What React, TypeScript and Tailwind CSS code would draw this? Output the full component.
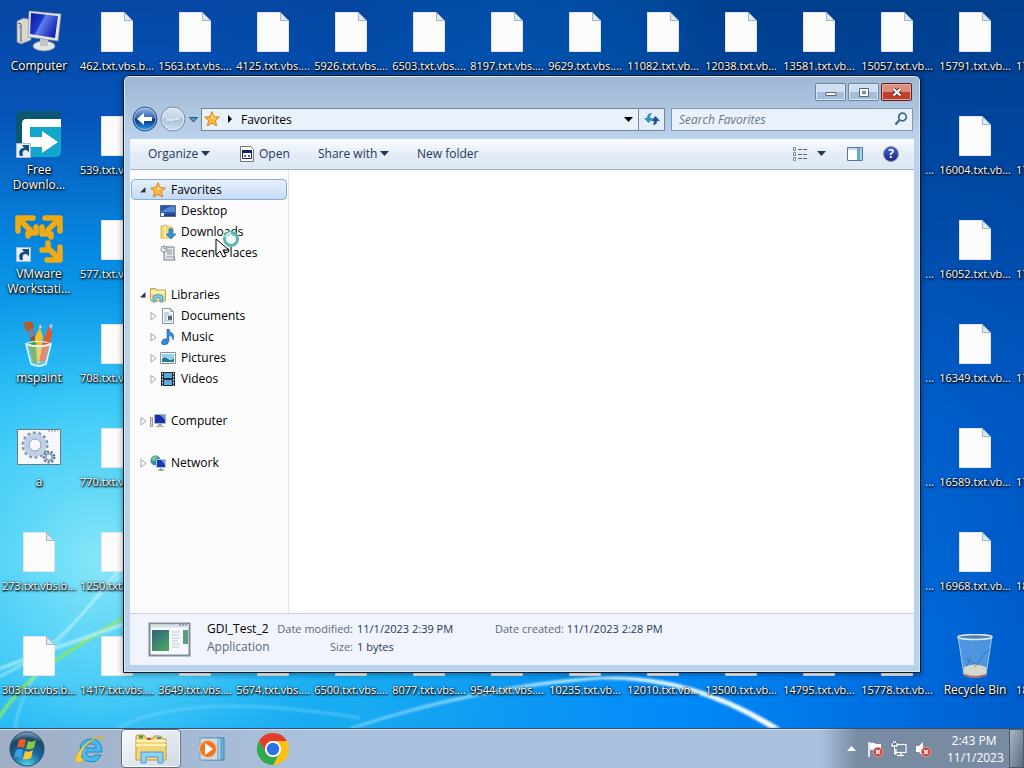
import React from 'react';

const columns: string[][] = [
  ['@computer:Computer', '@fdm:Free Downlo...', '@vmware:VMware Workstati...', '@paint:mspaint', '@gears:a', '273.txt.vbs.b...', '303.txt.vbs.b...'],
  ['462.txt.vbs.b...', '539.txt.vbs.b...', '577.txt.vbs.b...', '708.txt.vbs.b...', '770.txt.vbs.b...', '1250.txt.vbs....', '1417.txt.vbs....'],
  ['1563.txt.vbs....', '', '', '', '', '', '3649.txt.vbs....'],
  ['4125.txt.vbs....', '', '', '', '', '', '5674.txt.vbs....'],
  ['5926.txt.vbs....', '', '', '', '', '', '6500.txt.vbs....'],
  ['6503.txt.vbs....', '', '', '', '', '', '8077.txt.vbs....'],
  ['8197.txt.vbs....', '', '', '', '', '', '9544.txt.vbs....'],
  ['9629.txt.vbs....', '', '', '', '', '', '10235.txt.vb...'],
  ['11082.txt.vb...', '', '', '', '', '', '12010.txt.vb...'],
  ['12038.txt.vb...', '', '', '', '', '', '13500.txt.vb...'],
  ['13581.txt.vb...', '', '', '', '', '', '14795.txt.vb...'],
  ['15057.txt.vb...', '...', '...', '...', '...', '...', '15778.txt.vb...'],
  ['15791.txt.vb...', '16004.txt.vb...', '16052.txt.vb...', '16349.txt.vb...', '16589.txt.vb...', '16968.txt.vb...', '@bin:Recycle Bin'],
  ['17', '17', '17', '17', '17', '18', '18'],
];

const Wallpaper = () => (
  <svg className="absolute inset-0 h-full w-full" viewBox="0 0 1024 728" preserveAspectRatio="none" aria-hidden="true">
    <defs>
      <linearGradient id="sky" x1="0" y1="0" x2="0" y2="1">
        <stop offset="0" stopColor="#0646a4" />
        <stop offset=".16" stopColor="#0654b8" />
        <stop offset=".35" stopColor="#068be2" />
        <stop offset=".55" stopColor="#1db8f5" />
        <stop offset="1" stopColor="#18adf2" />
      </linearGradient>
      <linearGradient id="night" x1="0" y1="0" x2="1" y2="0">
        <stop offset="0" stopColor="#0060d0" stopOpacity="0" />
        <stop offset=".35" stopColor="#0080ee" stopOpacity=".05" />
        <stop offset=".65" stopColor="#0088fa" stopOpacity=".9" />
        <stop offset=".85" stopColor="#0070e2" />
        <stop offset="1" stopColor="#005ccb" />
      </linearGradient>
      <linearGradient id="dark" x1="0" y1="0" x2="0" y2="1">
        <stop offset="0" stopColor="#003f8d" />
        <stop offset=".3" stopColor="#0047a2" stopOpacity=".9" />
        <stop offset=".6" stopColor="#0052b8" stopOpacity=".4" />
        <stop offset=".85" stopColor="#0050b0" stopOpacity="0" />
      </linearGradient>
      <linearGradient id="fade" x1="0" y1="0" x2="1" y2="0">
        <stop offset=".2" stopColor="#fff" stopOpacity="0" />
        <stop offset=".7" stopColor="#fff" />
      </linearGradient>
      <mask id="right"><rect width="1024" height="728" fill="url(#fade)" /></mask>
      <radialGradient id="glow" gradientUnits="userSpaceOnUse" cx="100" cy="560" r="270">
        <stop offset="0" stopColor="#a4f4fa" stopOpacity=".8" />
        <stop offset=".5" stopColor="#66dffa" stopOpacity=".6" />
        <stop offset="1" stopColor="#30c0f8" stopOpacity="0" />
      </radialGradient>
      <linearGradient id="arc" x1="0" y1="0" x2="1" y2="0">
        <stop offset="0" stopColor="#7fe0ff" stopOpacity=".3" />
        <stop offset=".5" stopColor="#b5ecff" />
        <stop offset="1" stopColor="#fff" />
      </linearGradient>
      <filter id="soft"><feGaussianBlur stdDeviation="1" /></filter>
    </defs>
    <rect width="1024" height="728" fill="url(#sky)" />
    <rect width="1024" height="728" fill="url(#night)" />
    <rect width="1024" height="728" fill="url(#dark)" mask="url(#right)" />
    <rect width="520" height="728" fill="url(#glow)" />
    <g fill="none" filter="url(#soft)">
      <path d="M-4 722Q20 684 56 660T130 614" stroke="#8ce860" strokeWidth="3" />
      <path d="M-4 678Q50 655 94 600T150 545" stroke="#d8fbff" strokeWidth="2" strokeOpacity=".7" />
      <path d="M-4 670Q60 646 130 622" stroke="#e0fcff" strokeWidth="3" strokeOpacity=".6" />
      <path d="M15 728Q20 690 60 640T140 560" stroke="#d8fbff" strokeWidth="2" strokeOpacity=".35" />
      <path d="M118 728Q190 690 360 718" stroke="#a5ecff" strokeWidth="3" strokeOpacity=".3" />
    </g>
    <path d="M350 728Q480 684 600 677Q690 672 780 728L770 728Q690 678 600 679Q480 688 354 728Z" fill="url(#arc)" stroke="#fff" strokeOpacity=".4" filter="url(#soft)" />
  </svg>
);

const Shortcut = () => (
  <g>
    <path d="M1.500 29.500h14v14h-14z" fill="#e9f1f8" stroke="#a9bccd" />
    <path d="M5 42c-2-5 0-8 4-8l-2-3h7v7l-3-2c-3 0-4 2-3 6z" fill="#174b88" />
  </g>
);

const Page = () => (
  <svg className="h-11 w-9" viewBox="0 0 36 44" aria-hidden="true">
    <path d="M2.500 2.500h23l8 8v31h-31z" fill="#fbfbfa" stroke="#e2e6ec" />
    <path d="M25.500 2.500v8h8z" fill="#dce8f2" stroke="#8fa5ba" strokeWidth=".8" />
  </svg>
);

const DesktopIcon = ({ kind }: { kind: string }) => {
  if (kind === 'computer') {
    return (
      <svg className="h-12 w-12" viewBox="0 0 48 48" aria-hidden="true">
        <defs><linearGradient id="crt" x1="0" y1="0" x2="1" y2=".5"><stop offset="0" stopColor="#0718a0" /><stop offset=".45" stopColor="#1c3ccc" /><stop offset=".5" stopColor="#5e80ee" /><stop offset="1" stopColor="#1628b8" /></linearGradient></defs>
        <path d="M2 11l7-3 7 2v20L6 34l-4-2z" fill="#d8d8d2" stroke="#85878a" strokeWidth=".7" />
        <path d="M3 13l3 1v18M4 17h1" stroke="#555" strokeWidth="1" fill="none" />
        <ellipse cx="29" cy="36" rx="11" ry="5" fill="#e2e4e5" stroke="#898d92" strokeWidth=".8" />
        <path d="M25 29h8v7h-8z" fill="#c2c5c8" />
        <path d="M14 1l32 3-3 27-30-4z" fill="#e6e6df" stroke="#8d9398" strokeWidth=".7" />
        <path d="M16 3l27 3-3 22-25-4z" fill="url(#crt)" />
      </svg>
    );
  }
  if (kind === 'fdm') {
    return (
      <svg className="h-12 w-12 overflow-visible" viewBox="0 0 48 48" aria-hidden="true">
        <rect x="1" y="-3" width="45" height="46" rx="5" fill="#0d5671" />
        <path d="M15 12h31v27q-1 4-5 4H15z" fill="#10a7ca" />
        <path d="M7 10q0-5 4-5h35v8H15v10h12v-6l16 11-16 11v-6H7z" fill="#fff" />
        <Shortcut />
      </svg>
    );
  }
  if (kind === 'vmware') {
    return (
      <svg className="h-12 w-12 overflow-visible" viewBox="0 0 48 48" aria-hidden="true">
        <g fill="none" stroke="#efaa14" strokeWidth="5.500" strokeLinejoin="round" strokeLinecap="round">
          <path d="M3 13V0h15M4 1l11 11M21 9v6h-8v3" />
          <path d="M30 0h15v13M44 1L33 12M27 9v7h9v3" />
          <path d="M45 29v13H32M44 41L34 31M27 32h6v-7" />
        </g>
        <Shortcut />
      </svg>
    );
  }
  if (kind === 'paint') {
    return (
      <svg className="h-12 w-12 overflow-visible" viewBox="0 0 48 48" aria-hidden="true">
        <path d="M8 1l9-2 2 7-7 4z" fill="#b45a26" /><path d="M11 10l7-4 3 6-6 4z" fill="#6d84ad" /><path d="M15 16l5-3 6 25-4 1z" fill="#8a5638" />
        <path d="M20 15l5-10 3 10-3 26h-5z" fill="#f0c22e" /><path d="M24 6l1-4 2 4z" fill="#efdcc0" /><path d="M31 11l4-8 2 9-7 27h-6z" fill="#ee5522" /><path d="M34 3l4-1-2 6z" fill="#b8c3e6" /><path d="M17 18l4 2 1 21h-4l-4-17z" fill="#4a9a35" />
        <path d="M11 22q13 4 25 0l-5 20q-7 4-15 0z" fill="#ddecef" fillOpacity=".35" stroke="#e6f5fa" strokeWidth="1.500" />
        <ellipse cx="23.500" cy="22" rx="12" ry="2.500" fill="none" stroke="#eefaff" />
      </svg>
    );
  }
  if (kind === 'gears') {
    return (
      <svg className="h-12 w-12" viewBox="0 0 48 48" aria-hidden="true">
        <path d="M2.500 3.500h43v35h-43z" fill="#f5f7fa" stroke="#6d7985" /><path d="M33 5h10" stroke="#7e8995" strokeDasharray="2 1" />
        <circle cx="20" cy="19" r="12" fill="none" stroke="#7b93ab" strokeWidth="3" strokeDasharray="3 2.400" />
        <circle cx="20" cy="19" r="9" fill="none" stroke="#bdd0e5" strokeWidth="5" /><circle cx="20" cy="19" r="6" fill="#f5f7fa" stroke="#7e9ac2" />
        <circle cx="34" cy="31" r="5" fill="#cddbea" stroke="#617b98" strokeWidth="3" strokeDasharray="2 1.500" /><circle cx="34" cy="31" r="3" fill="#eef5fb" stroke="#7898b8" />
      </svg>
    );
  }
  if (kind === 'bin') {
    return (
      <svg className="h-12 w-12" viewBox="0 0 48 48" aria-hidden="true">
        <path d="M7 2l6 39q11 5 22 0l6-39z" fill="#9cc8ed" fillOpacity=".5" stroke="#a9c9e7" />
        <path d="M13 33q11-5 22 0v8q-11 4-22 0z" fill="#d8d6ca" /><path d="M13 41q11 4 22 0" stroke="#a76b67" strokeWidth="2" fill="none" />
        <path d="M14 24l10 6M24 33l9-13 6-5M16 32l3-8" stroke="#3468aa" strokeOpacity=".7" fill="none" />
        <ellipse cx="24" cy="3" rx="17" ry="2.500" fill="#4e82ba" stroke="#dcecf8" strokeWidth="1.500" />
      </svg>
    );
  }
  return <Page />;
};

const DesktopItem = ({ item }: { item: string }) => {
  if (item === '') return <div />;
  const special = item.startsWith('@');
  const [kind, name] = special ? item.slice(1).split(':') : ['page', item];
  return (
    <div className="flex flex-col items-center pt-[10px] text-white">
      <div className="flex h-12 items-start justify-center">
        <DesktopIcon kind={kind} />
      </div>
      <span className={`w-[74px] leading-[15px] [text-shadow:0_1px_2px_#000,1px_1px_2px_#000,0_0_3px_#0008] ${name === '...' ? 'text-right' : name.length < 3 && name !== 'a' ? 'text-left' : 'text-center'} ${special ? '' : 'whitespace-nowrap text-[11px]'}`}>
        {name}
      </span>
    </div>
  );
};

const Star = () => (
  <svg className="h-4 w-4 shrink-0" viewBox="0 0 16 16" aria-hidden="true">
    <path d="M8 .7l2.100 4.900 5.300.5-4 3.500 1.200 5.400L8 12.200 3.400 15l1.200-5.400-4-3.500 5.300-.5z" fill="#fcb93e" stroke="#d4791c" strokeWidth=".9" />
    <path d="M8 3l1.300 3.400 3.300.3-4.600 1z" fill="#fff0a8" />
  </svg>
);

const Monitor = () => (
  <svg className="h-4 w-4 shrink-0" viewBox="0 0 16 16" aria-hidden="true">
    <path d="M.5 4.500h2v9h-2z" fill="#ddd" stroke="#999" /><path d="M4.500 1.500h11v9h-11z" fill="#1730b0" stroke="#b0b4b8" />
    <path d="M10 2h5v5z" fill="#6d8fe8" /><path d="M8 11h4v2h2v1H6v-1h2z" fill="#a6adb4" />
  </svg>
);

const treeIcons: Record<string, React.ReactNode> = {
  Favorites: <Star />,
  Computer: <Monitor />,
  Desktop: (
    <svg className="h-4 w-4" viewBox="0 0 16 16" aria-hidden="true"><path d="M.5 2.500h15v11H.5z" fill="#2859b2" stroke="#52647d" /><path d="M1 9q7-6 14-6v6z" fill="#5688cf" /><path d="M1 12h14" stroke="#1c2c48" /><path d="M1 10h3v3H1z" fill="#e9f3ff" /></svg>
  ),
  Downloads: (
    <svg className="h-4 w-4" viewBox="0 0 16 16" aria-hidden="true"><path d="M1 2l5-1 2 2h4v11H1z" fill="#f4d877" stroke="#d0a640" strokeWidth=".8" /><path d="M5 2v12" stroke="#fff0b2" strokeWidth="2" /><path d="M9 5h4v5h3l-5 5-5-5h3z" fill="#3a92d4" stroke="#1c68aa" strokeWidth=".7" /></svg>
  ),
  'Recent Places': (
    <svg className="h-4 w-4" viewBox="0 0 16 16" aria-hidden="true"><path d="M4 2h10v9l1 4H4z" fill="#e4e8ec" stroke="#737d87" /><path d="M7 5h5M7 7h5M7 9h5M6 12h8" stroke="#8a96a3" /><circle cx="4" cy="4" r="3" fill="#fafcff" stroke="#7e8b98" /><path d="M4 2v2h2" stroke="#526172" strokeWidth=".8" fill="none" /></svg>
  ),
  Libraries: (
    <svg className="h-4 w-4" viewBox="0 0 16 16" aria-hidden="true"><path d="M.5 14V1.500h5l1 1.500h9v11z" fill="#f6df87" stroke="#c8a345" /><path d="M1 5h14" stroke="#fff5c7" strokeWidth="2" /><path d="M3 15V9q5-3 10 0v6h-3v-4H6v4z" fill="#7ec8e8" stroke="#388db5" strokeWidth=".7" /></svg>
  ),
  Documents: (
    <svg className="h-4 w-4" viewBox="0 0 16 16" aria-hidden="true"><path d="M2.500.5h8l3 3v12h-11z" fill="#fff" stroke="#8793a0" /><path d="M10.500.5v3h3M4 5h5M4 7h8M4 9h3M4 11h3M4 13h8" stroke="#91a5b9" fill="none" /><path d="M8 8h4v4H8z" fill="#567" /></svg>
  ),
  Music: (
    <svg className="h-4 w-4" viewBox="0 0 16 16" aria-hidden="true"><path d="M7 0h2q0 3 3 4 3 3 1 7 0-4-4-5v6q-1 4-5 4-4-1-2-4 1-3 5-2z" fill="#3588d4" stroke="#1b67b0" strokeWidth=".6" /></svg>
  ),
  Pictures: (
    <svg className="h-4 w-4" viewBox="0 0 16 16" aria-hidden="true"><path d="M.5 2.500h15v11H.5z" fill="#fff" stroke="#82909e" /><path d="M2 4h12v8H2z" fill="#8ed0f0" /><path d="M2 9q3-3 6 0t6-1v4H2z" fill="#28787f" /></svg>
  ),
  Videos: (
    <svg className="h-4 w-4" viewBox="0 0 16 16" aria-hidden="true"><path d="M1 1h14v14H1z" fill="#202c38" /><path d="M4 2h8v5H4zM4 9h8v5H4z" fill="#5ca8e0" /><path d="M2.500 2v13M13.500 2v13" stroke="#e6edf3" strokeDasharray="1.500 1.500" /></svg>
  ),
  Network: (
    <svg className="h-4 w-4" viewBox="0 0 16 16" aria-hidden="true"><circle cx="5.500" cy="5.500" r="5" fill="#2e89bd" /><path d="M1 4q4-5 7-2-3 1-3 4-2 1-4-2z" fill="#7bcf72" /><path d="M6.500 4.500h9v8h-9z" fill="#1838b8" stroke="#c0c8d0" /><path d="M11 5h4v5z" fill="#6b94ee" /><path d="M8 15h6M11 13v3" stroke="#6c7b8a" /></svg>
  ),
};

interface TreeRowProps {
  name: string;
  child?: boolean;
  open?: boolean;
  leaf?: boolean;
  selected?: boolean;
}

const TreeRow = ({ name, child, open, leaf, selected }: TreeRowProps) => (
  <button
    type="button"
    className={`flex h-[21px] w-full items-center rounded-sm border text-left text-black ${child ? 'pl-4' : 'pl-1.5'} ${selected ? 'border-[#84acdd] bg-linear-to-b from-[#e8f1fc] to-[#c5daf5]' : 'border-transparent'}`}
  >
    <svg className="mr-[2px] h-3 w-[10px] shrink-0" viewBox="0 0 10 12" aria-hidden="true">
      {!leaf && (open
        ? <path d="M2 8.500L7.500 3v5.500z" fill="#333" />
        : <path d="M3 2.500v7.500l5-3.750z" fill="#fff" stroke="#a3a3a3" />)}
    </svg>
    {treeIcons[name]}
    <span className="ml-[5px]">{name}</span>
  </button>
);

const Caret = () => (
  <svg className="h-[5px] w-[9px]" viewBox="0 0 9 5" aria-hidden="true"><path d="M0 0h9L4.500 5z" fill="currentColor" /></svg>
);

const TitleBar = () => (
  <div className="flex justify-end gap-[2px] pr-[2px] pt-[7px]">
    <button type="button" aria-label="Minimize" className="flex h-[18px] w-[31px] items-center justify-center rounded-[2px] border border-[#6d83a0] bg-linear-to-b from-[#cfdef0] from-50% to-[#a5bdd9] to-50% shadow-[inset_0_0_0_1px_#dce9f6]">
      <svg className="h-3 w-3" viewBox="0 0 12 12" aria-hidden="true"><path d="M1 6.500h10v3H1z" fill="#fff" stroke="#59687e" /></svg>
    </button>
    <button type="button" aria-label="Maximize" className="flex h-[18px] w-[31px] items-center justify-center rounded-[2px] border border-[#6d83a0] bg-linear-to-b from-[#cfdef0] from-50% to-[#a5bdd9] to-50% shadow-[inset_0_0_0_1px_#dce9f6]">
      <svg className="h-3 w-3" viewBox="0 0 12 12" aria-hidden="true"><path d="M1.500 2.500h9v8h-9z" fill="#fff" stroke="#59687e" /><path d="M4.500 5.500h3v2h-3z" fill="#b7c9de" stroke="#59687e" /></svg>
    </button>
    <button type="button" aria-label="Close" className="flex h-[18px] w-[31px] items-center justify-center rounded-[2px] border border-[#5c1f22] bg-linear-to-b from-[#dd8e7e] from-50% to-[#c1402b] to-50% shadow-[inset_0_0_0_1px_#eba898]">
      <svg className="h-3 w-3" viewBox="0 0 12 12" aria-hidden="true"><path d="M2.500 3l7 6.500m0-6.500l-7 6.500" stroke="#5b3039" strokeWidth="4" /><path d="M2.500 3l7 6.500m0-6.500l-7 6.500" stroke="#fff" strokeWidth="2.200" /></svg>
    </button>
  </div>
);

const NavBar = () => (
  <div className="flex items-center pb-[7px] pl-[2px] pr-px pt-[5px]">
    <button type="button" aria-label="Back" className="h-[26px] w-[26px] shrink-0">
      <svg viewBox="0 0 26 26" aria-hidden="true">
        <defs><linearGradient id="back" x1="0" y1="0" x2="0" y2="1"><stop offset="0" stopColor="#9bb8e4" /><stop offset=".48" stopColor="#2f60b4" /><stop offset=".52" stopColor="#0b2f86" /><stop offset="1" stopColor="#2fa6ea" /></linearGradient></defs>
        <circle cx="13" cy="13" r="12" fill="url(#back)" stroke="#33527e" /><circle cx="13" cy="13" r="10.800" fill="none" stroke="#d0e2f5" strokeOpacity=".6" />
        <path d="M5 13l7-6v4h8v4h-8v4z" fill="#fff" />
      </svg>
    </button>
    <button type="button" aria-label="Forward" className="ml-[2px] h-[26px] w-[26px] shrink-0">
      <svg viewBox="0 0 26 26" aria-hidden="true">
        <defs><linearGradient id="fwd" x1="0" y1="0" x2="0" y2="1"><stop offset="0" stopColor="#dae5f1" /><stop offset=".5" stopColor="#c4d3e4" /><stop offset=".52" stopColor="#a9bdd3" /><stop offset="1" stopColor="#d3e3f3" /></linearGradient></defs>
        <circle cx="13" cy="13" r="12" fill="url(#fwd)" stroke="#788ca5" /><circle cx="13" cy="13" r="10.800" fill="none" stroke="#edf5fc" strokeOpacity=".7" />
        <path d="M6 14h8M14 13h5" stroke="#d9e5f0" strokeWidth="2" />
      </svg>
    </button>
    <button type="button" aria-label="Recent pages" className="flex w-[15px] shrink-0 justify-center">
      <svg className="h-[7px] w-[9px]" viewBox="0 0 9 7" aria-hidden="true"><path d="M.5 1.500h8L4.500 6z" fill="#49a0bb" stroke="#24546e" /></svg>
    </button>
    <div className="flex h-[23px] min-w-0 flex-1 items-center border border-[#71859f] bg-[#e9f1fb] pl-[2px] text-black">
      <Star />
      <svg className="ml-[8px] h-[8px] w-[4px]" viewBox="0 0 4 8" aria-hidden="true"><path d="M0 0l4 4-4 4z" fill="#000" /></svg>
      <button type="button" className="ml-[9px]">Favorites</button>
      <button type="button" aria-label="Previous locations" className="ml-auto px-[5px] text-black"><Caret /></button>
    </div>
    <button type="button" aria-label="Refresh" className="flex h-[23px] w-[26px] shrink-0 items-center justify-center border border-l-0 border-[#71859f] bg-[#e4eefa]">
      <svg className="h-4 w-4" viewBox="0 0 16 16" aria-hidden="true"><path d="M8 2Q3 2 3 7H0l4.500 5L9 7H6Q6 4 8 2z" fill="#328fc0" /><path d="M9 14q4 0 4-4h3l-4.500-5L7 10h3q0 2-1 4z" fill="#1f5696" /></svg>
    </button>
    <label className="ml-[6px] flex h-[23px] w-[242px] items-center border border-[#8398b0] bg-[#e9f1fb] px-[7px]">
      <input type="text" aria-label="Search Favorites" placeholder="Search Favorites" className="min-w-0 flex-1 bg-transparent italic outline-none placeholder:text-[#6b7785]" />
      <svg className="-mr-[3px] h-[14px] w-[14px]" viewBox="0 0 14 14" aria-hidden="true"><circle cx="8.500" cy="5" r="3.800" fill="#eef7ff" stroke="#3d6590" strokeWidth="1.700" /><path d="M5.500 8L1.500 12.500" stroke="#3d6590" strokeWidth="2.200" /></svg>
    </label>
  </div>
);

const CommandBar = () => (
  <div className="flex h-[31px] items-center border-b border-[#a3b4c9] bg-linear-to-b from-[#fbfdff] via-[#e4ecf7] to-[#dde7f4] pb-px pl-[18px] pr-[15px] text-[#1e395b]">
    <button type="button" className="flex w-[92px] items-center gap-[3px]">Organize <Caret /></button>
    <button type="button" className="flex w-[78px] items-center gap-[5px]">
      <svg className="h-4 w-[14px]" viewBox="0 0 14 16" aria-hidden="true"><path d="M.5.5h10l3 3v12H.5z" fill="#fff" stroke="#777" /><path d="M2.500 5.500h9v7h-9z" fill="#fff" stroke="#182060" /><path d="M2 4h10v3H2z" fill="#182060" /><path d="M4 10h2M8 10h2M5 9v2M9 9v2" stroke="#334" /></svg>
      Open
    </button>
    <button type="button" className="flex w-[99px] items-center gap-[3px]">Share with <Caret /></button>
    <button type="button">New folder</button>
    <button type="button" aria-label="Change your view" className="ml-auto flex items-center gap-[9px]">
      <svg className="h-[14px] w-4" viewBox="0 0 16 14" aria-hidden="true"><path d="M1.500.5h2v3h-2zM1.500 5.500h2v3h-2zM1.500 10.500h2v3h-2z" fill="#fff" stroke="#7888a0" /><path d="M6 2.500h10M6 7.500h10M6 11.500h10" stroke="#53647c" strokeDasharray="4 1" /></svg>
      <Caret />
    </button>
    <button type="button" aria-label="Show the preview pane" className="ml-[21px]">
      <svg className="h-[14px] w-4" viewBox="0 0 16 14" aria-hidden="true"><path d="M.5.5h15v13H.5z" fill="#fff" stroke="#52789c" /><path d="M1 2h9" stroke="#8fb9d4" /><path d="M10 1h5v12h-5z" fill="#66acc4" /><path d="M13 1h2v12h-2z" fill="#a8d8df" /></svg>
    </button>
    <button type="button" aria-label="Get help" className="ml-5 flex h-4 w-4 items-center justify-center rounded-full border border-[#8b94b4] bg-linear-to-b from-[#4563c8] to-[#1a2b8c] text-[12px] font-bold leading-none text-white">?</button>
  </div>
);

const Sidebar = () => (
  <nav className="flex w-[159px] shrink-0 flex-col gap-[21px] border-r border-[#dfe8f3] bg-[#fcfcfc] pl-px pr-px pt-[9px]">
    <div>
      <TreeRow name="Favorites" open selected />
      <TreeRow name="Desktop" child leaf />
      <TreeRow name="Downloads" child leaf />
      <TreeRow name="Recent Places" child leaf />
    </div>
    <div>
      <TreeRow name="Libraries" open />
      <TreeRow name="Documents" child />
      <TreeRow name="Music" child />
      <TreeRow name="Pictures" child />
      <TreeRow name="Videos" child />
    </div>
    <TreeRow name="Computer" />
    <TreeRow name="Network" />
  </nav>
);

const DetailsPane = () => (
  <footer className="flex h-[52px] border-t border-[#c8d0dc] bg-[#f1f4fc] pl-[18px] pt-[6px] leading-[18px] text-[#5a6779]">
    <svg className="mt-[2px] h-[35px] w-[43px]" viewBox="0 0 43 35" aria-hidden="true">
      <defs><linearGradient id="thumb" x1="0" y1="0" x2=".6" y2="1"><stop offset="0" stopColor="#2f6080" /><stop offset="1" stopColor="#4aa062" /></linearGradient></defs>
      <path d="M1.500 1.500h40v32h-40z" fill="#f7f9fb" stroke="#7f8b98" strokeWidth="2" /><path d="M3 4h38" stroke="#d6e0e8" strokeWidth="3" /><path d="M31 3h9" stroke="#61707e" strokeDasharray="2 1" />
      <path d="M4 8h17v21H4z" fill="url(#thumb)" /><path d="M24 10h8M24 13h7M24 16h8M24 19h6M24 22h8M24 25h7" stroke="#bdc5cc" /><path d="M35 8h5v14h-5z" fill="#5b9d84" />
    </svg>
    <div className="ml-4 w-[62px] whitespace-nowrap">
      <div className="text-black">GDI_Test_2</div>
      <div>Application</div>
    </div>
    <div className="ml-1 w-[80px] whitespace-nowrap text-right text-[11px]">
      <div>Date modified:</div>
      <div>Size:</div>
    </div>
    <div className="ml-1 w-[138px] text-[11px] text-[#1e395b]">
      <div>11/1/2023 2:39 PM</div>
      <div>1 bytes</div>
    </div>
    <div className="text-[11px]">Date created: <span className="text-[#1e395b]">11/1/2023 2:28 PM</span></div>
  </footer>
);

const ExplorerWindow = () => (
  <section className="absolute left-[123px] right-[103px] top-[75px] bottom-[55px] flex flex-col rounded-t-md border border-[#0c1a2c] bg-linear-to-b from-[#a0b7d3] to-[#b9d1ea] to-[60px] px-[6px] pb-[7px] shadow-[inset_0_0_0_1px_#d9e8f6,0_1px_6px_#0006]">
    <TitleBar />
    <NavBar />
    <CommandBar />
    <div className="flex min-h-0 flex-1 bg-white">
      <Sidebar />
      <main className="flex-1" />
    </div>
    <DetailsPane />
  </section>
);

const Cursor = () => (
  <svg className="absolute left-[215px] top-[229px] h-8 w-7" viewBox="0 0 28 32" aria-hidden="true">
    <circle cx="16" cy="10" r="6.500" fill="#eefcfa" fillOpacity=".7" stroke="#5cb8ae" strokeWidth="3" />
    <path d="M10 8q2-4 6-4" stroke="#b8f1e9" strokeWidth="2" fill="none" />
    <path d="M1 10v16l4-4 3 6 3-1-3-6h6z" fill="#fff" stroke="#000" />
  </svg>
);

const Taskbar = () => (
  <div className="flex h-10 shrink-0 border-t border-[#33526f] bg-linear-to-r from-[#9fafc5] via-[#a9c1dd] via-30% to-[#a9c1dd] to-[80%] shadow-[inset_0_1px_0_#d2deeb]">
    <button type="button" aria-label="Start" className="mr-[6px] flex w-[54px] items-center justify-center">
      <svg className="h-9 w-9" viewBox="0 0 36 36" aria-hidden="true">
        <defs><radialGradient id="orb" cx=".5" cy="1" r="1"><stop offset="0" stopColor="#54d8ee" /><stop offset=".45" stopColor="#176aa0" /><stop offset=".8" stopColor="#1c4668" /><stop offset="1" stopColor="#8fb0c8" /></radialGradient></defs>
        <circle cx="18" cy="18" r="17" fill="url(#orb)" stroke="#264866" />
        <path d="M10 9q4-2 7 0l-2 8q-4-2-7 0z" fill="#ea5b24" /><path d="M19 10q4 2 8-1l-2 8q-4 2-8 1z" fill="#8bc63e" /><path d="M7 19q4-2 7 0l-2 8q-4-2-7 0z" fill="#3f9fe6" /><path d="M16 20q4 2 8-1l-2 8q-4 2-8 1z" fill="#fdc92e" />
      </svg>
    </button>
    <div className="flex flex-1 gap-px">
      <button type="button" aria-label="Internet Explorer" className="flex w-[60px] items-center justify-center">
        <svg className="h-8 w-8" viewBox="0 0 32 32" aria-hidden="true">
          <path d="M28 19H12q1 5 5 5 3 0 4-2h6q-3 7-10 7Q6 28 6 17T17 6q11 0 11 13zM12 15h10q0-4-5-4t-5 4z" fill="#49b8ee" stroke="#1781c0" strokeWidth=".9" />
          <path d="M30 6q0-5-9-1Q10 10 4 20-2 31 6 29q3-1 5-3-4 1-4-3Q8 14 19 7q8-5 11-1z" fill="#f9cf3a" stroke="#d99c16" strokeWidth=".5" />
        </svg>
      </button>
      <button type="button" aria-label="Windows Explorer" className="flex w-[60px] items-center justify-center rounded-sm border border-[#5f7388] bg-linear-to-br from-[#f8fafc] to-[#cfd9e3] shadow-[inset_0_0_0_1px_#fff]">
        <svg className="h-8 w-9" viewBox="0 0 36 32" aria-hidden="true">
          <path d="M3 27V4q0-2 2-2h6l2 3h8V3h7l2 3h3v21z" fill="#f3d777" stroke="#bf983a" /><path d="M3 12h30M3 8h30" stroke="#fff2b8" strokeWidth="2" /><path d="M6 4h4" stroke="#3f9a45" strokeWidth="3" /><path d="M14 6h4" stroke="#c04930" strokeWidth="2" /><path d="M24 5h4" stroke="#3a88cc" strokeWidth="2" />
          <path d="M8 30V19h22v11h-5v-6H13v6z" fill="#8fd0f2" stroke="#4a9acb" />
        </svg>
      </button>
      <button type="button" aria-label="Windows Media Player" className="flex w-[60px] items-center justify-center">
        <svg className="h-7 w-7" viewBox="0 0 28 28" aria-hidden="true">
          <path d="M9 3h17v22H9z" fill="#6eb3dc" stroke="#3984b4" /><path d="M7 3h16v22H7z" fill="#a4d4ee" stroke="#4e94c0" /><path d="M2 3h18v22H2z" fill="#c8dcec" stroke="#7a9ab6" />
          <circle cx="10" cy="14" r="8.500" fill="#ee7821" stroke="#fbc28d" /><path d="M7 8l8 6-8 6z" fill="#fff" />
        </svg>
      </button>
      <button type="button" aria-label="Google Chrome" className="flex w-[60px] items-center justify-center">
        <svg className="h-8 w-8" viewBox="0 0 32 32" aria-hidden="true">
          <circle cx="16" cy="16" r="16" fill="#fbc116" /><path d="M2.140 8A16 16 0 0 1 29.860 8H16a8 8 0 0 0-6.930 12z" fill="#e33b2e" /><path d="M2.140 8A16 16 0 0 0 16 32l6.930-12A8 8 0 0 1 9.070 20z" fill="#2da94f" />
          <circle cx="16" cy="16" r="8" fill="#fff" /><circle cx="16" cy="16" r="6.200" fill="#2a72e8" />
        </svg>
      </button>
    </div>
    <div className="flex items-center bg-linear-to-r from-transparent to-[#788ba3] to-[36px] pl-[26px] text-white">
      <button type="button" aria-label="Show hidden icons" className="mr-[11px] text-white">
        <svg className="h-[5px] w-[9px]" viewBox="0 0 9 5" aria-hidden="true"><path d="M0 5h9L4.500 0z" fill="#fff" /></svg>
      </button>
      <button type="button" aria-label="Action Center" className="mr-[8px]">
        <svg className="h-4 w-4" viewBox="0 0 16 16" aria-hidden="true"><path d="M2 1v15" stroke="#fff" strokeWidth="1.500" /><path d="M3 2q4-1 6 1h5v7H9Q6 8 3 9z" fill="#fff" /><circle cx="11" cy="11" r="4.800" fill="#d63b32" stroke="#f3b2ac" strokeWidth=".7" /><path d="M9 9l4 4m0-4l-4 4" stroke="#fff" strokeWidth="1.600" /></svg>
      </button>
      <button type="button" aria-label="Network" className="mr-[8px]">
        <svg className="h-4 w-4" viewBox="0 0 16 16" aria-hidden="true"><path d="M6 3.500h9v8H5V8M10 12v2M6 14.500h7M1 1v4h5V1M2.500 0v2M4.500 0v2M3.500 5v8h2" stroke="#2e3d4e" strokeWidth="3" fill="none" strokeOpacity=".35" /><path d="M6 3.500h9v8H5V8M10 12v2M6 14.500h7M1 2v3h5V2M2.500 0v2M4.500 0v2M3.500 5v8h2" stroke="#fff" strokeWidth="1.300" fill="none" /></svg>
      </button>
      <button type="button" aria-label="Volume muted" className="mr-4">
        <svg className="h-4 w-4" viewBox="0 0 16 16" aria-hidden="true"><path d="M1 5h3l4-4v14l-4-4H1z" fill="#fff" /><circle cx="11" cy="11" r="4.800" fill="#d63b32" stroke="#f3b2ac" strokeWidth=".7" /><path d="M9 9l4 4m0-4l-4 4" stroke="#fff" strokeWidth="1.600" /></svg>
      </button>
      <div className="mr-2 w-[54px] whitespace-nowrap text-center leading-[17px]">
        <div>2:43 PM</div>
        <div>11/1/2023</div>
      </div>
      <button type="button" aria-label="Show desktop" className="h-full w-[15px] border border-[#4c5c6e] bg-linear-to-br from-[#a9b6c5] to-[#5d6d80]" />
    </div>
  </div>
);

export default function App() {
  return (
    <div className="flex h-screen flex-col overflow-hidden font-['Open_Sans',sans-serif] text-[12px] leading-[15px]">
      <div className="relative min-h-0 flex-1 overflow-hidden bg-[#0b7ddb]">
        <Wallpaper />
        <div className="relative grid grid-flow-col auto-cols-[78px] grid-rows-[repeat(7,104px)]">
          {columns.flatMap((column, c) => column.map((item, r) => <DesktopItem key={`${c}-${r}`} item={item} />))}
        </div>
        <ExplorerWindow />
        <Cursor />
      </div>
      <Taskbar />
    </div>
  );
}
